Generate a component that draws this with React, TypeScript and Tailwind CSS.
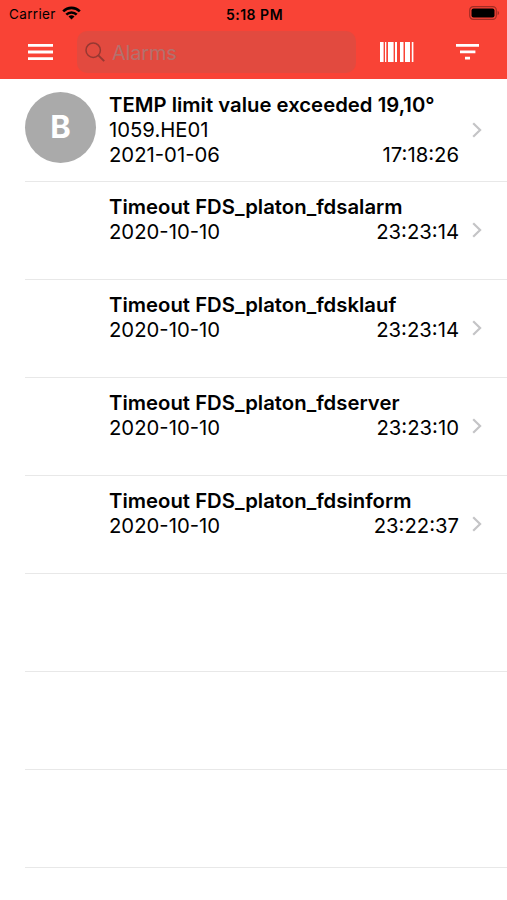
import React from 'react';

// Types
interface Alarm {
  id: string;
  title: string;
  source?: string;
  date: string;
  time: string;
  badge?: string;
}

// Constants
const ALARMS: readonly Alarm[] = [
  { id: 'temp', title: 'TEMP limit value exceeded 19,10°', source: '1059.HE01', date: '2021-01-06', time: '17:18:26', badge: 'B' },
  { id: 'fdsalarm', title: 'Timeout FDS_platon_fdsalarm', date: '2020-10-10', time: '23:23:14' },
  { id: 'fdsklauf', title: 'Timeout FDS_platon_fdsklauf', date: '2020-10-10', time: '23:23:14' },
  { id: 'fdserver', title: 'Timeout FDS_platon_fdserver', date: '2020-10-10', time: '23:23:10' },
  { id: 'fdsinform', title: 'Timeout FDS_platon_fdsinform', date: '2020-10-10', time: '23:22:37' },
] as const;

const EMPTY_ROWS = [0, 1, 2];

const StatusBar = () => (
  <div className="grid grid-cols-3 items-center h-7 pl-[9px] pr-[7px] text-black">
    <div className="flex items-center gap-[6px]">
      <span className="text-[13.5px] tracking-[0.35px]">Carrier</span>
      <svg className="w-[19px] h-[14px] -mt-[2px]" viewBox="0 0 19 14" fill="none" stroke="currentColor" strokeWidth="2.6">
        <path d="M1.2 5.3a11.8 11.8 0 0 1 16.6 0" />
        <path d="M4.3 8.6a7.4 7.4 0 0 1 10.4 0" />
        <path d="M9.5 13.6 6.5 10.6a4.3 4.3 0 0 1 6 0z" fill="currentColor" stroke="none" />
      </svg>
    </div>
    <span className="text-center text-[14px] font-semibold tracking-[0.5px] whitespace-nowrap">5:18 PM</span>
    <svg className="justify-self-end w-[31px] h-[14px] -mt-[2px]" viewBox="0 0 31 14">
      <rect x="0.7" y="0.7" width="26.6" height="12.6" rx="3.6" fill="none" stroke="#a22c24" strokeWidth="1.2" />
      <rect x="2.5" y="2.5" width="23" height="9" rx="2" fill="#000" />
      <path d="M28.6 4.8c2 .8 2 3.6 0 4.4z" fill="#a22c24" />
    </svg>
  </div>
);

const Toolbar = () => (
  <div className="flex items-center h-[51px] px-7 pb-1">
    <button aria-label="Menu">
      <svg className="block w-[25px] h-[16px]" viewBox="0 0 25 16" fill="#fff">
        <path d="M0 0h25v2.8H0zM0 6.6h25v2.8H0zM0 13.2h25V16H0z" />
      </svg>
    </button>
    <div className="flex items-center gap-[7px] w-[279px] h-[42px] ml-6 pl-2 rounded-[10px] bg-[#e24a3f]">
      <svg className="w-5 h-5" viewBox="0 0 20 20" fill="none" stroke="#963832" strokeWidth="1.5">
        <circle cx="8.2" cy="8.2" r="7.2" />
        <path d="m13.4 13.4 5.8 5.8" strokeWidth="1.9" />
      </svg>
      <span className="pt-[2px] text-[20px] tracking-[-0.2px] text-[#b3716d]">Alarms</span>
    </div>
    <button aria-label="Scan barcode" className="ml-6">
      <svg className="block w-[34px] h-5" viewBox="0 0 34 20" fill="#fff">
        <path d="M0 0h3.6v20H0zM5 0h1.3v20H5zM8 0h5.6v20H8zM15 0h2v20h-2zM20 0h3.5v20H20zM25 0h5v20h-5zM31.8 0h1.6v20h-1.6z" />
      </svg>
    </button>
    <button aria-label="Filter" className="ml-auto">
      <svg className="block w-[23px] h-[16px]" viewBox="0 0 23 16" fill="#fff">
        <path d="M0 0h23v2.8H0zM4 6.4h15.4v2.8H4zM9 12.8h5v2.8H9z" />
      </svg>
    </button>
  </div>
);

const AlarmRow = ({ alarm }: { alarm: Alarm }) => (
  <li className={`flex ml-[25px] pt-3 border-b border-[#e8e8e8] ${alarm.source ? 'h-[102px]' : 'h-[98px]'}`}>
    <div className="w-[84px] shrink-0">
      {alarm.badge && (
        <div className="flex items-center justify-center size-[71px] rounded-full bg-[#aaaaaa] text-white text-[31px] font-bold">
          {alarm.badge}
        </div>
      )}
    </div>
    <div className="w-[350px] text-[20.3px] leading-[25px] whitespace-nowrap">
      <h2 className="font-semibold tracking-[0.02px]">{alarm.title}</h2>
      {alarm.source && <p>{alarm.source}</p>}
      <div className="flex justify-between">
        <span>{alarm.date}</span>
        <span>{alarm.time}</span>
      </div>
    </div>
    <svg
      className={`w-[10px] h-4 ml-[13px] ${alarm.source ? 'mt-[30px]' : 'mt-[28px]'}`}
      viewBox="0 0 10 16"
      fill="none"
      stroke="#c4c4c6"
      strokeWidth="2.2"
    >
      <path d="m1.2 1.2 6.9 6.8-6.9 6.8" />
    </svg>
  </li>
);

const App = () => {
  return (
    <main className="w-[507px] h-[900px] overflow-hidden bg-white text-black font-[Inter,sans-serif]">
      <header className="h-[79px] bg-[#f94336]">
        <StatusBar />
        <Toolbar />
      </header>

      <ul className="pt-px">
        {ALARMS.map((alarm) => (
          <AlarmRow key={alarm.id} alarm={alarm} />
        ))}
        {EMPTY_ROWS.map((row) => (
          <li key={row} className="h-[98px] ml-[25px] border-b border-[#e8e8e8]" />
        ))}
      </ul>
    </main>
  );
};

export default App;
